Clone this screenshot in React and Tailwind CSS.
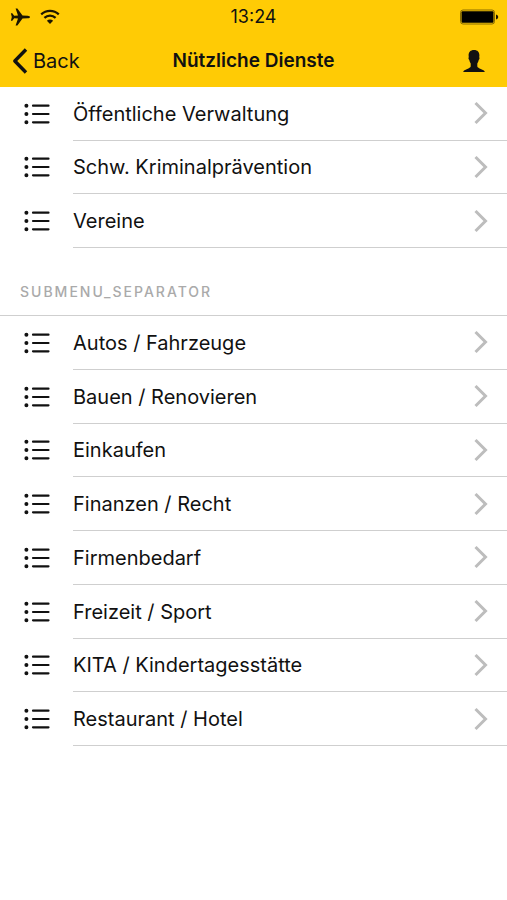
import React from 'react'

const services = [
  { name: 'Öffentliche Verwaltung', href: '#verwaltung' },
  { name: 'Schw. Kriminalprävention', href: '#kriminalpraevention' },
  { name: 'Vereine', href: '#vereine' },
]

const categories = [
  { name: 'Autos / Fahrzeuge', href: '#autos' },
  { name: 'Bauen / Renovieren', href: '#bauen' },
  { name: 'Einkaufen', href: '#einkaufen' },
  { name: 'Finanzen / Recht', href: '#finanzen' },
  { name: 'Firmenbedarf', href: '#firmenbedarf' },
  { name: 'Freizeit / Sport', href: '#freizeit' },
  { name: 'KITA / Kindertagesstätte', href: '#kita' },
  { name: 'Restaurant / Hotel', href: '#restaurant' },
]

const PlaneIcon = () => (
  <svg className="h-5 w-5" viewBox="0 0 20 20" fill="#1c1600" aria-hidden="true">
    <path d="M20 10c0-.8-1-1.200-2.200-1.300L12.500 8.500 7.400 1.500H5.600L8 8.500 4.200 8.700 2.300 6.200H.9L1.800 10 .9 13.800H2.300L4.200 11.300 8 11.500 5.600 18.500H7.400L12.500 11.500 17.800 11.300C19 11.200 20 10.800 20 10Z" />
  </svg>
)

const WifiIcon = () => (
  <svg className="h-4 w-5" viewBox="0 0 20 16" fill="none" stroke="#1c1600" strokeWidth="2.200" aria-hidden="true">
    <path d="M1.200 5.400a12.600 12.600 0 0 1 17.600 0" />
    <path d="M4.400 8.900a8 8 0 0 1 11.200 0" />
    <path d="M6.900 11.700a4.400 4.400 0 0 1 6.200 0L10 14.900Z" fill="#1c1600" stroke="none" />
  </svg>
)

const BatteryIcon = () => (
  <svg className="h-4 w-10" viewBox="0 0 40 16" aria-hidden="true">
    <rect x="1.500" y="1" width="34" height="14" rx="2.500" fill="none" stroke="#8a6d00" />
    <rect x="2.500" y="2.300" width="32" height="11.400" rx="1" fill="#000" />
    <path d="M37 5.500c1.500.4 2.200 1.400 2.200 2.500s-.7 2.100-2.200 2.500Z" fill="#1c1600" />
  </svg>
)

const BackIcon = () => (
  <svg className="h-7 w-4" viewBox="0 0 16 28" fill="none" stroke="#111" strokeWidth="3.400" strokeLinejoin="round" aria-hidden="true">
    <path d="M14 2.500 2.800 14 14 25.500" />
  </svg>
)

const PersonIcon = () => (
  <svg className="h-6 w-6" viewBox="0 0 24 24" fill="#111" aria-hidden="true">
    <path d="M12 1C8.400 1 6.600 3.200 6.600 6.300c0 .9.1 1.400.2 2-.6.3-.4 2 .5 2.600.4 1.700.8 2.600 1.400 3.500v3.200c-.3 1.100-1.800 1.700-3.500 2.400C3 20.900 1.500 21.500 1.200 23h21.600c-.3-1.500-1.800-2.100-4-3-1.700-.7-3.200-1.300-3.500-2.400v-3.200c.6-.9 1-1.800 1.400-3.500.9-.6 1.100-2.300.5-2.600.1-.6.2-1.100.2-2C17.400 3.200 15.600 1 12 1Z" />
  </svg>
)

const ListIcon = () => (
  <svg className="h-6 w-7" viewBox="0 0 28 24" fill="none" stroke="#111" strokeWidth="2.200" strokeLinecap="round" aria-hidden="true">
    <path d="M9 3.700H24.500M9 12H24.500M9 20.300H24.500" />
    <path d="M2.400 3.700h.01M2.400 12h.01M2.400 20.300h.01" strokeWidth="4" />
  </svg>
)

const ChevronIcon = () => (
  <svg className="h-6 w-4" viewBox="0 0 16 24" fill="none" stroke="#bdbdbd" strokeWidth="3" aria-hidden="true">
    <path d="M2.500 2 12.500 12 2.500 22" />
  </svg>
)

const MenuRow = ({ item }) => (
  <li className="flex">
    <a href={item.href} className="flex flex-1 items-stretch text-[#111]">
      <span className="flex w-[73px] items-center pl-6">
        <ListIcon />
      </span>
      <span className="flex flex-1 items-center justify-between border-b border-[#cfcfcf] pr-[18px]">
        <span className="pt-px text-xl">{item.name}</span>
        <ChevronIcon />
      </span>
    </a>
  </li>
)

const App = () => {
  return (
    <div className="min-h-screen bg-white font-['Inter','Liberation_Sans',sans-serif]">
      <header className="bg-[#ffcb05] text-[#111]">
        {/* Status bar */}
        <div className="grid h-[34px] grid-cols-3 items-center px-2">
          <div className="flex items-center gap-[10px] pl-[2px]">
            <PlaneIcon />
            <WifiIcon />
          </div>
          <time className="text-center text-lg">13:24</time>
          <div className="flex justify-end">
            <BatteryIcon />
          </div>
        </div>

        <div className="grid h-[53px] grid-cols-[1fr_auto_1fr] items-center px-3">
          <button type="button" className="flex items-center gap-[5px] justify-self-start text-xl">
            <BackIcon />
            Back
          </button>
          <h1 className="text-[19px] leading-7 font-semibold">Nützliche Dienste</h1>
          <button type="button" aria-label="Profil" className="justify-self-end pr-[9px]">
            <PersonIcon />
          </button>
        </div>
      </header>

      <main>
        <ul className="grid min-h-[161px] auto-rows-fr">
          {services.map((item) => (
            <MenuRow key={item.name} item={item} />
          ))}
        </ul>

        <h2 className="flex h-[68px] items-end border-b border-[#cfcfcf] px-5 pb-[13px] text-sm font-medium tracking-[2px] text-[#aaa]">
          SUBMENU_SEPARATOR
        </h2>

        <ul className="grid min-h-[430px] auto-rows-fr">
          {categories.map((item) => (
            <MenuRow key={item.name} item={item} />
          ))}
        </ul>
      </main>
    </div>
  )
}

export default App
